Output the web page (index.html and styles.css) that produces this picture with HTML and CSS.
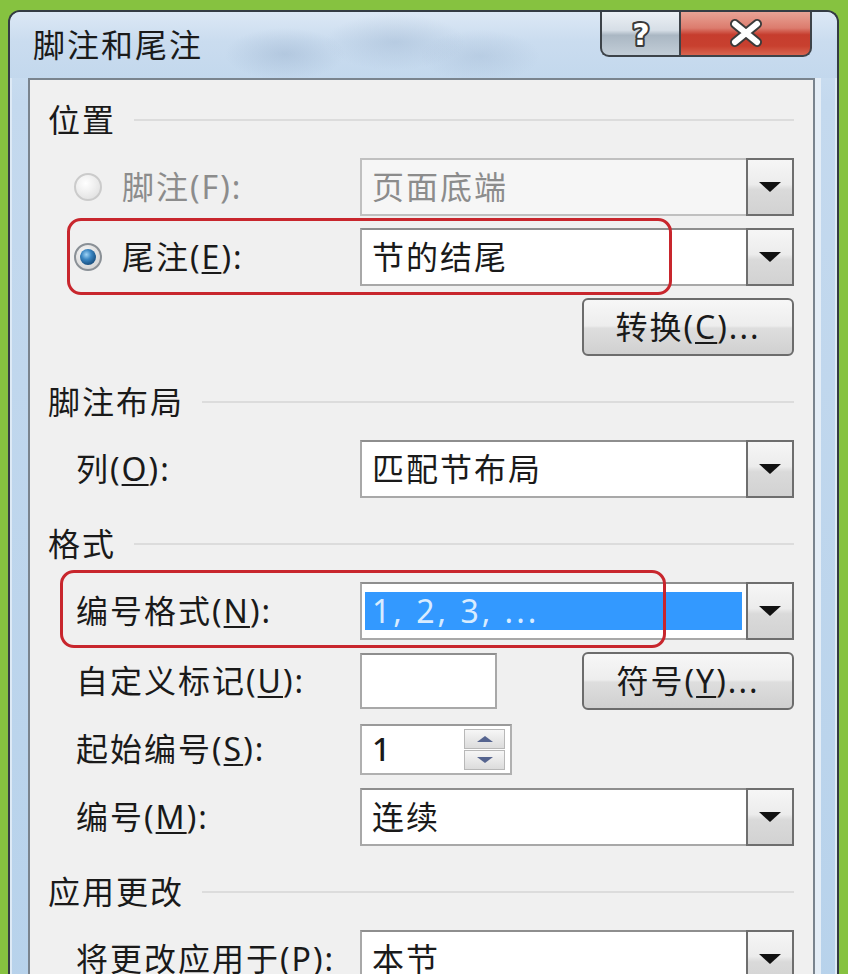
FILE: index.html
```html
<!DOCTYPE html>
<html lang="zh-CN">
<head>
<meta charset="utf-8">
<title>脚注和尾注</title>
<link rel="stylesheet" href="styles.css">
</head>
<body>
<div class="window">
  <div class="titlebar">
    <div class="title">脚注和尾注</div>
    <div class="caption">
      <div class="cap help">
        <svg width="32" height="44" viewBox="0 0 32 44">
          <text class="q" x="16" y="34" text-anchor="middle">?</text>
        </svg>
      </div>
      <div class="cap close">
        <svg width="40" height="30" viewBox="0 0 40 30">
          <path d="M9 6 L31 24 M31 6 L9 24" stroke="#3b3b3b" stroke-width="10" stroke-linecap="round"/>
          <path d="M9 6 L31 24 M31 6 L9 24" stroke="#ffffff" stroke-width="6" stroke-linecap="round"/>
        </svg>
      </div>
    </div>
  </div>

  <div class="client">
    <div class="section-head first">位置</div>

    <div class="row">
      <div class="label disabled"><span class="radio"></span>脚注(F):</div>
      <div class="combo disabled"><span class="value">页面底端</span><span class="drop"></span></div>
    </div>

    <div class="row">
      <div class="label"><span class="radio checked"></span>尾注(<u>E</u>):</div>
      <div class="combo"><span class="value">节的结尾</span><span class="drop"></span></div>
      <div class="callout callout-e"></div>
    </div>

    <div class="row">
      <div class="label"></div>
      <div class="btn-cell"><div class="button">转换(<u>C</u>)...</div></div>
    </div>

    <div class="section-head">脚注布局</div>

    <div class="row">
      <div class="label indent">列(<u>O</u>):</div>
      <div class="combo"><span class="value">匹配节布局</span><span class="drop"></span></div>
    </div>

    <div class="section-head">格式</div>

    <div class="row">
      <div class="label indent">编号格式(<u>N</u>):</div>
      <div class="combo"><span class="value selected">1, 2, 3, ...</span><span class="drop"></span></div>
      <div class="callout callout-n"></div>
    </div>

    <div class="row">
      <div class="label indent">自定义标记(<u>U</u>):</div>
      <div class="split">
        <div class="textbox"></div>
        <div class="button">符号(<u>Y</u>)...</div>
      </div>
    </div>

    <div class="row short">
      <div class="label indent">起始编号(<u>S</u>):</div>
      <div class="spinner">
        <span class="spin-value">1</span>
        <span class="spin-buttons">
          <span class="spin up"></span>
          <span class="spin down"></span>
        </span>
      </div>
    </div>

    <div class="row">
      <div class="label indent">编号(<u>M</u>):</div>
      <div class="combo"><span class="value">连续</span><span class="drop"></span></div>
    </div>

    <div class="section-head">应用更改</div>

    <div class="row">
      <div class="label indent">将更改应用于(<u>P</u>):</div>
      <div class="combo"><span class="value">本节</span><span class="drop"></span></div>
    </div>
  </div>
</div>
</body>
</html>
```

FILE: styles.css
```css
html, body {
  margin: 0;
  height: 974px;
  overflow: hidden;
}

body {
  background: #86c240;
  padding: 10px 9px 0 8px;
  box-sizing: border-box;
  font-family: "Noto Sans", "Noto Sans CJK SC", sans-serif;
  font-size: 32px;
  letter-spacing: 2px;
  color: #1a1a1a;
}

.window {
  height: 1010px;
  border: 2px solid #343c44;
  border-bottom: none;
  border-radius: 12px 12px 0 0;
  background: linear-gradient(#d2e2f2 0, #c4d9ee 90px, #b7d2eb 100%);
  box-shadow: inset 2px 0 0 #dde9f5, inset -2px 0 0 #dde9f5;
  display: flex;
  flex-direction: column;
  overflow: hidden;
}

.titlebar {
  height: 66px;
  flex: none;
  display: flex;
  justify-content: space-between;
  align-items: flex-start;
  background:
    radial-gradient(ellipse 60px 26px at 275px 42px, rgba(140, 165, 195, 0.35), transparent),
    radial-gradient(ellipse 70px 28px at 385px 30px, rgba(140, 165, 195, 0.3), transparent),
    radial-gradient(ellipse 60px 26px at 470px 44px, rgba(140, 165, 195, 0.25), transparent),
    linear-gradient(#dce8f5 0, #cadcef 45%, #c3d8ed 100%);
}

.title {
  padding-left: 23px;
  line-height: 66px;
  color: #1a1a1a;
}

.caption {
  display: flex;
  margin-top: -2px;
  margin-right: 25px;
  height: 47px;
}

.cap {
  box-sizing: border-box;
  height: 47px;
  border: 2px solid #3d4349;
  border-top: none;
  display: flex;
  align-items: center;
  justify-content: center;
}

.help {
  width: 79px;
  border-right: none;
  border-radius: 0 0 0 9px;
  background: linear-gradient(#eef2f6 0%, #d6dee6 45%, #aab7c3 56%, #c2cdd7 100%);
}

.q {
  font-family: "DejaVu Sans", sans-serif;
  font-weight: bold;
  font-size: 30px;
  letter-spacing: 0;
  fill: #ffffff;
  stroke: #3a3a3a;
  stroke-width: 4px;
  stroke-linejoin: round;
  paint-order: stroke fill;
}

.close {
  width: 133px;
  border-radius: 0 0 9px 0;
  background: linear-gradient(#eaa89a 0%, #dc7c6e 40%, #c63d2e 55%, #c8402f 80%, #d8644f 100%);
}

.client {
  flex: 1;
  margin: 0 22px 0 18px;
  border: 2px solid #7a848e;
  border-bottom: none;
  background: #f0f0f0;
  box-shadow: 6px 0 0 #e4edf6;
  padding: 20px 19px 0 0;
  display: flex;
  flex-direction: column;
  gap: 12px;
}

.section-head {
  height: 40px;
  margin-top: 14px;
  margin-bottom: 6px;
  padding-left: 18px;
  display: flex;
  align-items: center;
  gap: 18px;
  line-height: 40px;
  white-space: nowrap;
}

.section-head.first {
  margin-top: 0;
}

.section-head::after {
  content: "";
  flex: 1;
  height: 2px;
  background: #dcdcdc;
}

.row {
  position: relative;
  height: 58px;
  display: grid;
  grid-template-columns: 330px 1fr;
  align-items: center;
}

.row.short {
  height: 54px;
}

.label {
  display: flex;
  align-items: center;
  white-space: nowrap;
  line-height: 1.2;
}

.label.indent {
  padding-left: 46px;
}

.label.disabled {
  color: #8c8c8c;
}

u {
  text-decoration-thickness: 2px;
  text-underline-offset: 3px;
}

.radio {
  position: relative;
  width: 28px;
  height: 28px;
  box-sizing: border-box;
  margin-left: 44px;
  margin-right: 20px;
  border-radius: 50%;
  border: 2px solid #cbcbcb;
  background: radial-gradient(circle at 40% 35%, #ffffff, #e4e4e4 75%);
}

.radio.checked {
  border-color: #8a9096;
  background: radial-gradient(circle at 40% 35%, #fafafa, #d4d4d4 80%);
}

.radio.checked::after {
  content: "";
  position: absolute;
  left: 4px;
  top: 4px;
  width: 16px;
  height: 16px;
  border-radius: 50%;
  background: radial-gradient(circle at 40% 35%, #9fd4f6 0, #3a86c2 35%, #1c5587 70%, #173f63 100%);
}

.combo {
  height: 58px;
  box-sizing: border-box;
  border: 2px solid #a8a8a8;
  border-top-color: #8e8e8e;
  background: #fff;
  display: flex;
  align-items: stretch;
}

.combo.disabled {
  background: #f6f6f6;
  border-color: #c0c0c0;
  color: #8c8c8c;
}

.value {
  flex: 1;
  display: flex;
  align-items: center;
  padding-left: 10px;
  line-height: 1.2;
  white-space: nowrap;
}

.value.selected {
  margin: 8px 4px 8px 3px;
  padding-left: 7px;
  background: #3399ff;
  color: #d8ecff;
  letter-spacing: 3px;
}

.drop {
  width: 48px;
  box-sizing: border-box;
  margin: -2px -2px -2px 0;
  border: 2px solid #6e6e6e;
  background: linear-gradient(#f6f6f6 0%, #ececec 45%, #dadada 55%, #d2d2d2 100%);
  display: flex;
  align-items: center;
  justify-content: center;
}

.drop::after {
  content: "";
  border-left: 11px solid transparent;
  border-right: 11px solid transparent;
  border-top: 10px solid #111;
}

.btn-cell {
  display: flex;
  justify-content: flex-end;
}

.button {
  width: 212px;
  height: 58px;
  box-sizing: border-box;
  border: 2px solid #6c6c6c;
  border-radius: 6px;
  background: linear-gradient(#f7f7f7 0%, #ededed 48%, #dedede 52%, #d0d0d0 100%);
  display: flex;
  align-items: center;
  justify-content: center;
  line-height: 1.2;
  white-space: nowrap;
}

.split {
  display: flex;
  justify-content: space-between;
  align-items: center;
}

.textbox {
  width: 137px;
  height: 56px;
  box-sizing: border-box;
  border: 2px solid #a8a8a8;
  border-top-color: #8e8e8e;
  background: #fff;
}

.spinner {
  position: relative;
  width: 152px;
  height: 51px;
  box-sizing: border-box;
  border: 2px solid #b0b0b0;
  border-top-color: #9a9a9a;
  background: #fff;
  display: flex;
  align-items: center;
}

.spin-value {
  padding-left: 10px;
  font-weight: 500;
  line-height: 1.2;
}

.spin-buttons {
  position: absolute;
  left: 102px;
  top: 3px;
  width: 41px;
  display: flex;
  flex-direction: column;
  gap: 1px;
}

.spin {
  height: 20px;
  box-sizing: border-box;
  border: 1px solid #b8b8b8;
  background: linear-gradient(#f6f6f6, #dcdcdc);
  display: flex;
  align-items: center;
  justify-content: center;
}

.spin.up::after {
  content: "";
  border-left: 8px solid transparent;
  border-right: 8px solid transparent;
  border-bottom: 6px solid #55648f;
}

.spin.down::after {
  content: "";
  border-left: 8px solid transparent;
  border-right: 8px solid transparent;
  border-top: 6px solid #55648f;
}

.callout {
  position: absolute;
  box-sizing: border-box;
  border: 3px solid #c8262d;
  border-radius: 14px;
  pointer-events: none;
}

.callout-e {
  left: 37px;
  top: -10px;
  width: 605px;
  height: 77px;
}

.callout-n {
  left: 30px;
  top: -12px;
  width: 606px;
  height: 78px;
}
```
